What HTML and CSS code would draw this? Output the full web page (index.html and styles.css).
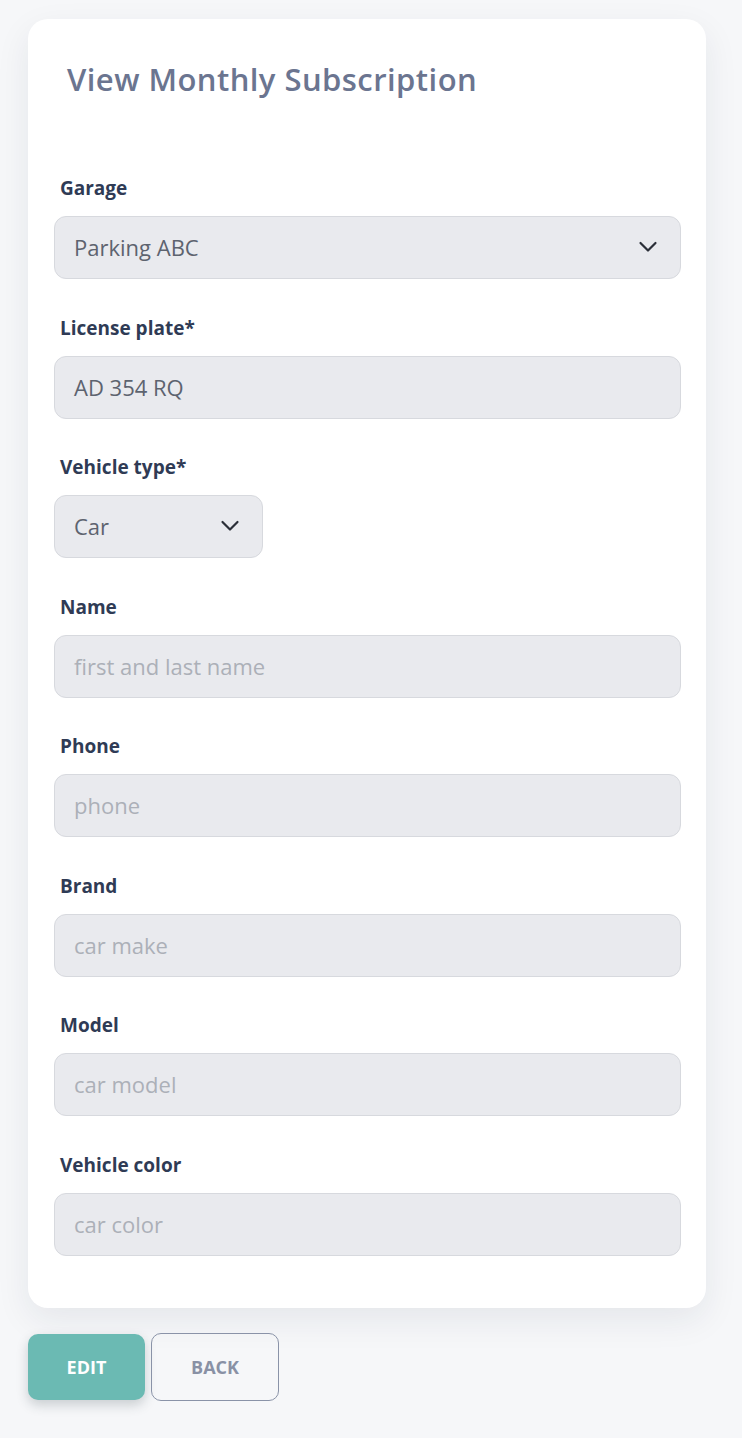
FILE: index.html
```html
<!DOCTYPE html>
<html lang="en">
<head>
  <meta charset="UTF-8">
  <title>View Monthly Subscription</title>
  <link rel="stylesheet" href="styles.css">
</head>
<body>
<div class="page">
  <div class="card">
    <h2 class="title">View Monthly Subscription</h2>
    <form class="sub-form">
      <div class="field">
        <label>Garage</label>
        <div class="control select">
          <span class="value">Parking ABC</span>
          <svg class="chevron" viewBox="0 0 20 20" width="20" height="20"><path d="M2.5 6l7.5 7.5 7.5-7.5" fill="none" stroke="#2b2f38" stroke-width="2.2" stroke-linecap="round" stroke-linejoin="round"/></svg>
        </div>
      </div>
      <div class="field">
        <label>License plate*</label>
        <div class="control"><span class="value">AD 354 RQ</span></div>
      </div>
      <div class="field">
        <label>Vehicle type*</label>
        <div class="control select small">
          <span class="value">Car</span>
          <svg class="chevron" viewBox="0 0 20 20" width="20" height="20"><path d="M2.5 6l7.5 7.5 7.5-7.5" fill="none" stroke="#2b2f38" stroke-width="2.2" stroke-linecap="round" stroke-linejoin="round"/></svg>
        </div>
      </div>
      <div class="field">
        <label>Name</label>
        <div class="control"><span class="placeholder">first and last name</span></div>
      </div>
      <div class="field">
        <label>Phone</label>
        <div class="control"><span class="placeholder">phone</span></div>
      </div>
      <div class="field">
        <label>Brand</label>
        <div class="control"><span class="placeholder">car make</span></div>
      </div>
      <div class="field">
        <label>Model</label>
        <div class="control"><span class="placeholder">car model</span></div>
      </div>
      <div class="field">
        <label>Vehicle color</label>
        <div class="control"><span class="placeholder">car color</span></div>
      </div>
    </form>
  </div>
  <div class="actions">
    <button type="button" class="btn-edit">EDIT</button>
    <button type="button" class="btn-back">BACK</button>
  </div>
</div>
</body>
</html>
```

FILE: styles.css
```css
html, body { margin: 0; padding: 0; background: #f6f7f9; font-family: 'Open Sans', Arial, sans-serif; }
.page { padding: 19px 36px 0 28px; min-height: 1438px; box-sizing: border-box; }
.card {
  background: #fff; border-radius: 20px; padding: 42px 25px 52px 26px;
  box-shadow: 0 12px 34px rgba(30, 40, 60, 0.08);
}
.title { margin: 0 0 78px 13px; font-size: 31px; line-height: 36px; font-weight: 600; letter-spacing: 0.45px; color: #6b7590; }
.field { margin-bottom: 35.5px; }
.field:last-child { margin-bottom: 0; }
.field label { display: block; padding-left: 6px; margin-bottom: 14px; font-size: 19px; line-height: 27px; font-weight: 700; color: #2f3b55; }
.control {
  height: 63px; box-sizing: border-box; border: 1px solid #d7d9de; border-radius: 12px; background: #e9eaee;
  display: flex; align-items: center; justify-content: space-between; padding: 0 22px 1px 19px; font-size: 22px;
}
.control.small { width: 209px; }
.value { color: #5d636f; }
.placeholder { color: #acb0b8; }
.chevron { display: block; }
.actions { display: flex; gap: 6px; margin-top: 25px; align-items: center; }
.btn-edit, .btn-back { font-family: inherit; font-size: 18px; font-weight: 700; border-radius: 10px; cursor: pointer; }
.btn-edit { width: 117px; height: 66px; background: #6bbab3; color: #fff; border: none; box-shadow: 0 5px 12px rgba(40, 60, 70, 0.22); }
.btn-back { width: 128px; height: 68px; background: transparent; color: #8991a5; border: 1px solid #8a93a8; }
```
